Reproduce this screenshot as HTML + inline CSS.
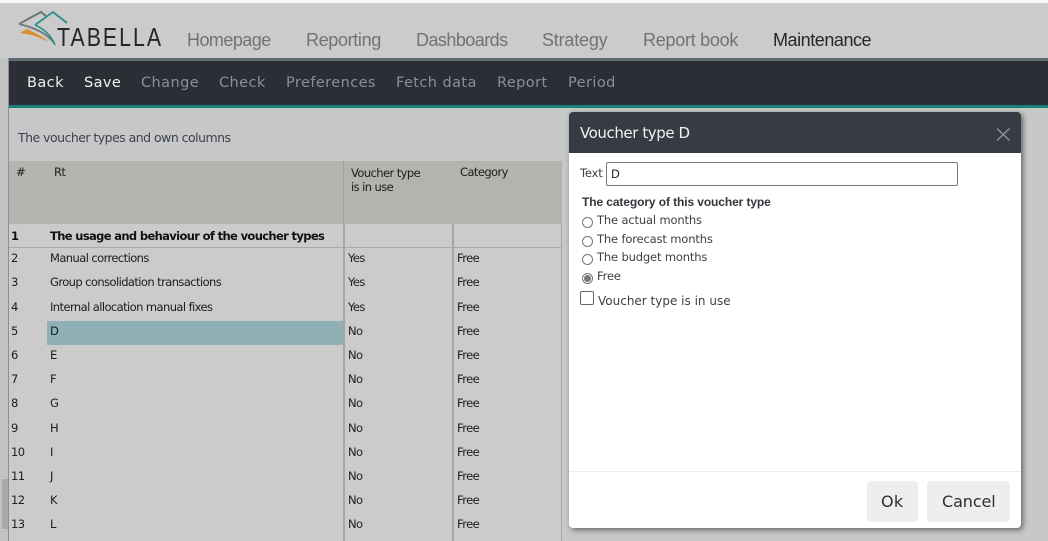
<!DOCTYPE html>
<html><head><meta charset="utf-8"><style>
html,body{margin:0;padding:0}
body{width:1048px;height:541px;overflow:hidden;position:relative;background:#cbcbcb;font-family:"DejaVu Sans","Liberation Sans",sans-serif;}
div,span{position:absolute;white-space:nowrap}
.n{font-size:18px;line-height:24px;top:28px;color:#6f7377;font-family:"Liberation Sans",sans-serif;letter-spacing:-.45px}
.m{line-height:20px;top:73px;color:#8b9097;font-family:"DejaVu Sans",sans-serif;font-size:14.5px;letter-spacing:.42px}
.t{font-size:11.5px;line-height:14px;color:#1c1c1c;font-family:"DejaVu Sans",sans-serif;letter-spacing:-.58px}
.d{font-size:11.5px;line-height:14px;color:#3c4046;letter-spacing:-.15px}
.r{width:9px;height:9px;border:1px solid #777;border-radius:50%;background:#fff;left:582px}
</style></head><body>
<div style="left:0;top:0;width:1048px;height:3px;background:#f7f7f7"></div>
<svg style="position:absolute;left:15px;top:8px" width="150" height="42" viewBox="15 8 150 42">
<path d="M19 24 L41 12 L47 17" fill="none" stroke="#6f767a" stroke-width="2"/>
<path d="M19 24 C32 27 46 32 54 43" fill="none" stroke="#6f767a" stroke-width="1.800"/>
<path d="M35 25 L53 12 L67 23" fill="none" stroke="#2a9088" stroke-width="1.800"/>
<path d="M35 25 C44 29 51 35 55 45" fill="none" stroke="#2a9088" stroke-width="1.600"/>
<path d="M20 33 L27 29 C35 33 44 37 48 42 C40 37 30 34 20 33Z" fill="#d98d2b"/>
<text transform="translate(57,46) scale(.82,1)" font-family="Liberation Sans,sans-serif" font-size="26" fill="#24272a" textLength="127">TABELLA</text>
</svg>
<span class="n" style="left:187px;letter-spacing:-.55px">Homepage</span>
<span class="n" style="left:306px;letter-spacing:-.35px">Reporting</span>
<span class="n" style="left:416px;letter-spacing:-.55px">Dashboards</span>
<span class="n" style="left:542px;letter-spacing:-.2px">Strategy</span>
<span class="n" style="left:643px;letter-spacing:-.27px">Report book</span>
<span class="n" style="left:773px;color:#24272b">Maintenance</span>

<div style="left:0;top:58px;width:8px;height:483px;background:#c2c2c2"></div>
<div style="left:8px;top:58px;width:1040px;height:483px;border-left:1px solid #8f8f8f;box-sizing:border-box"></div>
<div style="left:9px;top:58px;width:1039px;height:3px;background:#5f6a70"></div>
<div style="left:9px;top:61px;width:1039px;height:44px;background:#2b2e34"></div>
<div style="left:9px;top:105px;width:1039px;height:3px;background:#17817a"></div>
<div style="left:9px;top:108px;width:553px;height:53px;background:#c6c7c9"></div>
<div style="left:562px;top:108px;width:486px;height:433px;background:#c8c8c8"></div>
<span class="m" style="left:27px;color:#eceded">Back</span>
<span class="m" style="left:84px;color:#f2f2f2">Save</span>
<span class="m" style="left:141px">Change</span>
<span class="m" style="left:219px">Check</span>
<span class="m" style="left:286px">Preferences</span>
<span class="m" style="left:396px">Fetch data</span>
<span class="m" style="left:497px">Report</span>
<span class="m" style="left:568px">Period</span>
<span class="t" style="left:18px;top:131px;font-size:12.5px;color:#3f4347;letter-spacing:-.53px">The voucher types and own columns</span>

<div style="left:9px;top:161px;width:553px;height:63px;background:#b3b3af"></div>
<div style="left:343px;top:161px;width:1px;height:63px;background:#a0a09c"></div>
<span class="t" style="left:16px;top:165px">#</span>
<span class="t" style="left:54px;top:165px">Rt</span>
<span class="t" style="left:351px;top:166px">Voucher type</span>
<span class="t" style="left:351px;top:180px">is in use</span>
<span class="t" style="left:460px;top:165px">Category</span>

<div style="left:9px;top:224px;width:553px;height:317px;background:#cbcbcb"></div>
<div style="left:9px;top:247px;width:553px;height:1px;background:#a8a8a8"></div>
<div style="left:343px;top:224px;width:2px;height:317px;background:#a6a6a6"></div>
<div style="left:452px;top:224px;width:2px;height:317px;background:#a6a6a6"></div>
<div style="left:561px;top:224px;width:1px;height:317px;background:#a6a6a6"></div>
<div style="left:47px;top:321px;width:296px;height:24px;background:#8fb1b6"></div>
<div style="left:0;top:-1px;width:1048px;height:541px">
<span class="t" style="left:11px;top:230px;font-weight:bold;color:#111">1</span>
<span class="t" style="left:50px;top:230px;font-weight:bold;color:#111;letter-spacing:-.64px">The usage and behaviour of the voucher types</span>
<span class="t" style="left:11px;top:252px">2</span><span class="t" style="left:50px;top:252px">Manual corrections</span><span class="t" style="left:348px;top:252px">Yes</span><span class="t" style="left:457px;top:252px">Free</span>
<span class="t" style="left:11px;top:276px">3</span><span class="t" style="left:50px;top:276px">Group consolidation transactions</span><span class="t" style="left:348px;top:276px">Yes</span><span class="t" style="left:457px;top:276px">Free</span>
<span class="t" style="left:11px;top:301px">4</span><span class="t" style="left:50px;top:301px">Internal allocation manual fixes</span><span class="t" style="left:348px;top:301px">Yes</span><span class="t" style="left:457px;top:301px">Free</span>
<span class="t" style="left:11px;top:325px">5</span><span class="t" style="left:50px;top:325px">D</span><span class="t" style="left:348px;top:325px">No</span><span class="t" style="left:457px;top:325px">Free</span>
<span class="t" style="left:11px;top:349px">6</span><span class="t" style="left:50px;top:349px">E</span><span class="t" style="left:348px;top:349px">No</span><span class="t" style="left:457px;top:349px">Free</span>
<span class="t" style="left:11px;top:373px">7</span><span class="t" style="left:50px;top:373px">F</span><span class="t" style="left:348px;top:373px">No</span><span class="t" style="left:457px;top:373px">Free</span>
<span class="t" style="left:11px;top:397px">8</span><span class="t" style="left:50px;top:397px">G</span><span class="t" style="left:348px;top:397px">No</span><span class="t" style="left:457px;top:397px">Free</span>
<span class="t" style="left:11px;top:422px">9</span><span class="t" style="left:50px;top:422px">H</span><span class="t" style="left:348px;top:422px">No</span><span class="t" style="left:457px;top:422px">Free</span>
<span class="t" style="left:11px;top:446px">10</span><span class="t" style="left:50px;top:446px">I</span><span class="t" style="left:348px;top:446px">No</span><span class="t" style="left:457px;top:446px">Free</span>
<span class="t" style="left:11px;top:470px">11</span><span class="t" style="left:50px;top:470px">J</span><span class="t" style="left:348px;top:470px">No</span><span class="t" style="left:457px;top:470px">Free</span>
<span class="t" style="left:11px;top:494px">12</span><span class="t" style="left:50px;top:494px">K</span><span class="t" style="left:348px;top:494px">No</span><span class="t" style="left:457px;top:494px">Free</span>
<span class="t" style="left:11px;top:518px">13</span><span class="t" style="left:50px;top:518px">L</span><span class="t" style="left:348px;top:518px">No</span><span class="t" style="left:457px;top:518px">Free</span>
</div>
<div style="left:2px;top:479px;width:6px;height:50px;background:#a9a9a9"></div>

<div style="left:569px;top:112px;width:452px;height:416px;background:#fff;border-radius:4px;box-shadow:2px 2px 6px rgba(0,0,0,.5)"></div>
<div style="left:569px;top:112px;width:452px;height:41px;background:#373b43;border-radius:4px 4px 0 0"></div>
<span style="left:580px;top:123px;font-size:15px;line-height:20px;color:#f3f3f3;letter-spacing:-.42px">Voucher type D</span>
<svg style="position:absolute;left:995px;top:127px" width="16" height="15"><path d="M2 1.500 L14.500 13.500 M14.500 1.500 L2 13.500" stroke="#8f9398" stroke-width="1.500" fill="none"/></svg>
<span class="d" style="left:580px;top:166px">Text</span>
<div style="left:606px;top:162px;width:352px;height:24px;box-sizing:border-box;border:1px solid #777;border-radius:2px;background:#fff"></div>
<span class="d" style="left:611px;top:167px;color:#222">D</span>
<span class="d" style="left:582px;top:195px;font-weight:bold;font-family:'Liberation Sans',sans-serif;font-size:12px;letter-spacing:-.1px;color:#33373c">The category of this voucher type</span>
<div class="r" style="top:217px"></div><span class="d" style="left:597px;top:213px">The actual months</span>
<div class="r" style="top:236px"></div><span class="d" style="left:597px;top:232px">The forecast months</span>
<div class="r" style="top:254px"></div><span class="d" style="left:597px;top:250px">The budget months</span>
<div class="r" style="top:273px"></div><div style="left:584px;top:275px;width:7px;height:7px;border-radius:50%;background:#777"></div><span class="d" style="left:597px;top:269px">Free</span>
<div style="left:580px;top:291px;width:14px;height:14px;box-sizing:border-box;border:1px solid #666;border-radius:2px;background:#fff"></div>
<span class="d" style="left:598px;top:294px;font-size:12px;letter-spacing:0">Voucher type is in use</span>
<div style="left:569px;top:471px;width:452px;height:1px;background:#ececec"></div>
<div style="left:867px;top:481px;width:51px;height:41px;background:#eee;border-radius:4px"></div>
<div style="left:927px;top:481px;width:83px;height:41px;background:#eee;border-radius:4px"></div>
<span style="left:881px;top:491px;font-size:16px;line-height:21px;color:#2b2f36;letter-spacing:.3px">Ok</span>
<span style="left:942px;top:491px;font-size:16px;line-height:21px;color:#2b2f36;letter-spacing:-.1px">Cancel</span>
</body></html>
